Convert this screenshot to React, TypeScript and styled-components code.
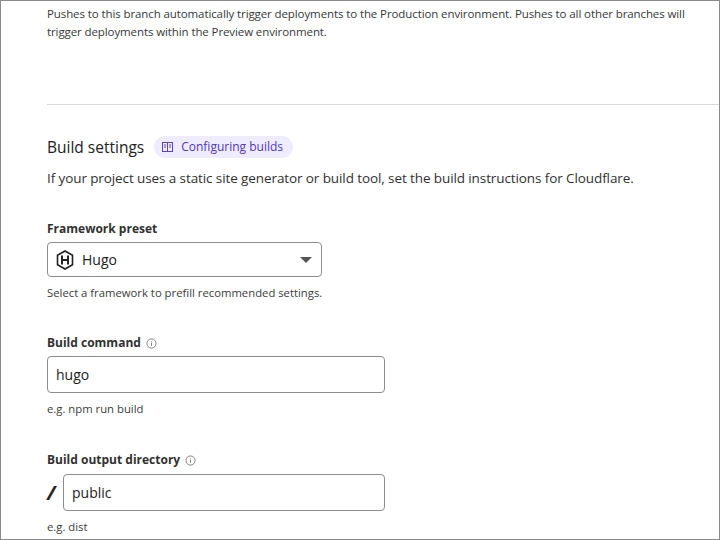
import React from "react";
import styled, { createGlobalStyle } from "styled-components";

const Global = createGlobalStyle`
  html, body { margin: 0; padding: 0; background: #fff; }
  body { font-family: "Open Sans", "Noto Sans", sans-serif; color: #313131; }
`;

const Frame = styled.div`
  width: 720px; height: 540px; box-sizing: border-box;
  border: 1px solid #8a8a8a; overflow: hidden;
`;
const Inner = styled.div`padding: 4px 0 0 46px;`;
const Intro = styled.p`
  margin: 0; font-size: 11.5px; letter-spacing: -0.1px; line-height: 18px; width: 640px; color: #36393a;
`;
const Divider = styled.hr`
  border: 0; border-top: 1px solid #d9d9d9; margin: 63px 0 0 0;
`;
const HeadRow = styled.div`
  display: flex; align-items: center; gap: 10px; margin-top: 31px;
`;
const H2 = styled.h2`margin: 0; font-size: 15.5px; font-weight: 400; color: #222;`;
const Pill = styled.a`
  display: inline-flex; align-items: center; gap: 8px; background: #efedfd;
  color: #4f35c9; font-size: 12px; border-radius: 12px; padding: 2px 10px 3px 8px;
`;
const Desc = styled.p`margin: 10px 0 0; font-size: 13.5px; letter-spacing: -0.1px; line-height: 20px; color: #313131;`;
const Field = styled.div<{ $top: number }>`margin-top: ${p => p.$top}px;`;
const Label = styled.div`
  display: flex; align-items: center; gap: 5px; font-size: 12px; font-weight: 700; color: #313131; line-height: 16px;
`;
const Box = styled.div<{ $w: number; $h: number }>`
  box-sizing: border-box; width: ${p => p.$w}px; height: ${p => p.$h}px; margin-top: 5px;
  border: 1px solid #8d8d8d; border-radius: 4px; display: flex; align-items: center;
  padding: 0 8px; font-size: 14px; color: #222; gap: 8px;
`;
const Hint = styled.div`font-size: 11.3px; color: #3c3c3c; margin-top: 9px; line-height: 14px;`;
const Row = styled.div`display: flex; align-items: center; gap: 8px; margin-top: 1px;`;
const Slash = styled.span`font-size: 20px; font-weight: 700; color: #222; font-style: italic; width: 8px; padding-top: 4px;`;
const Caret = styled.span`
  margin-left: auto; width: 0; height: 0; border-left: 6px solid transparent;
  border-right: 6px solid transparent; border-top: 6px solid #555; margin-right: 1px;
`;

const Info = () => (
  <svg width="11" height="11" viewBox="0 0 12 12"><circle cx="6" cy="6" r="5" fill="none" stroke="#777" strokeWidth="1"/><path d="M6 5v3.5M6 3.3v.6" stroke="#777" strokeWidth="1"/></svg>
);
const BookIcon = () => (
  <svg width="11" height="10" viewBox="0 0 11 10"><rect x="0.5" y="0.5" width="10" height="9" fill="none" stroke="#5a45c9"/><path d="M5.5 1v8M2 3h2M2 5h2M7 3h2M7 5h2" stroke="#5a45c9"/></svg>
);
const HugoIcon = () => (
  <svg width="18" height="20" viewBox="0 0 18 20"><path d="M9 1l7.5 4.3v9.4L9 19l-7.5-4.3V5.3z" fill="#fff" stroke="#222" strokeWidth="1.6"/><path d="M6 5.5v9M12 5.5v9M6 10h6" stroke="#222" strokeWidth="2"/></svg>
);

export default function App() {
  return (
    <Frame>
      <Global />
      <Inner>
        <Intro>Pushes to this branch automatically trigger deployments to the Production environment. Pushes to all other branches will trigger deployments within the Preview environment.</Intro>
        <Divider />
        <HeadRow>
          <H2>Build settings</H2>
          <Pill><BookIcon />Configuring builds</Pill>
        </HeadRow>
        <Desc>If your project uses a static site generator or build tool, set the build instructions for Cloudflare.</Desc>
        <Field $top={33}>
          <Label>Framework preset</Label>
          <Box $w={275} $h={35}><HugoIcon />Hugo<Caret /></Box>
          <Hint>Select a framework to prefill recommended settings.</Hint>
        </Field>
        <Field $top={35}>
          <Label>Build command <Info /></Label>
          <Box $w={338} $h={37}>hugo</Box>
          <Hint>e.g. npm run build</Hint>
        </Field>
        <Field $top={36}>
          <Label>Build output directory <Info /></Label>
          <Row>
            <Slash>/</Slash>
            <Box $w={322} $h={37}>public</Box>
          </Row>
          <Hint>e.g. dist</Hint>
        </Field>
      </Inner>
    </Frame>
  );
}
